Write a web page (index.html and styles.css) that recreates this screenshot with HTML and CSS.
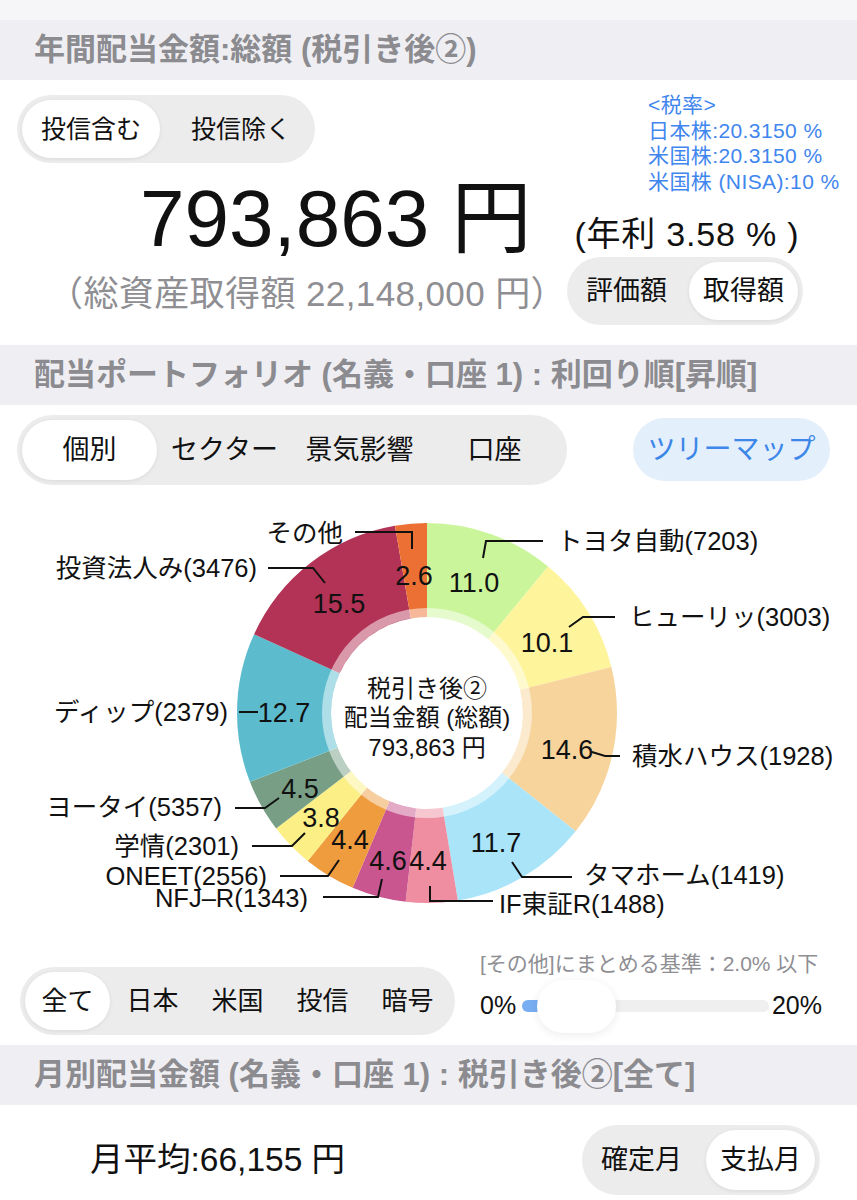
FILE: index.html
```html
<!DOCTYPE html>
<html>
<head>
<meta charset="UTF-8">
<title>配当ポートフォリオ</title>
<link rel="stylesheet" href="styles.css">
</head>
<body>

<div class="sec-head sec-head-first">年間配当金額:総額 (税引き後②)</div>

<div class="summary">
  <div class="summary-top">
    <div class="seg seg-fund">
      <span class="seg-item on">投信含む</span>
      <span class="seg-item">投信除く</span>
    </div>
    <div class="tax">
      &lt;税率&gt;<br>
      日本株:20.3150 %<br>
      米国株:20.3150 %<br>
      米国株 (NISA):10 %
    </div>
  </div>
  <div class="total">
    <span class="total-num">793,863 円</span>
    <span class="total-rate">(年利 3.58 % )</span>
  </div>
  <div class="summary-bottom">
    <span class="cost">（総資産取得額 22,148,000 円）</span>
    <div class="seg seg-basis">
      <span class="seg-item">評価額</span>
      <span class="seg-item on">取得額</span>
    </div>
  </div>
</div>

<div class="sec-head">配当ポートフォリオ (名義・口座 1) : 利回り順[昇順]</div>

<div class="portfolio">
  <div class="tabs-row">
    <div class="seg seg-tabs">
      <span class="seg-item on">個別</span>
      <span class="seg-item">セクター</span>
      <span class="seg-item">景気影響</span>
      <span class="seg-item">口座</span>
    </div>
    <a class="tree-btn" href="javascript:">ツリーマップ</a>
  </div>

  <svg class="chart" width="857" height="464" viewBox="0 485 857 464">
    <g transform="rotate(-90 427 713)" fill="none" stroke-width="94">
      <circle cx="427" cy="713" r="143" pathLength="100" stroke="#cbf59b" stroke-dasharray="11 89" stroke-dashoffset="0"/>
      <circle cx="427" cy="713" r="143" pathLength="100" stroke="#fef49c" stroke-dasharray="10.1 89.9" stroke-dashoffset="-11"/>
      <circle cx="427" cy="713" r="143" pathLength="100" stroke="#f7d49c" stroke-dasharray="14.6 85.4" stroke-dashoffset="-21.1"/>
      <circle cx="427" cy="713" r="143" pathLength="100" stroke="#a9e4f9" stroke-dasharray="11.7 88.3" stroke-dashoffset="-35.7"/>
      <circle cx="427" cy="713" r="143" pathLength="100" stroke="#ee8ea0" stroke-dasharray="4.4 95.6" stroke-dashoffset="-47.4"/>
      <circle cx="427" cy="713" r="143" pathLength="100" stroke="#c9568f" stroke-dasharray="4.6 95.4" stroke-dashoffset="-51.8"/>
      <circle cx="427" cy="713" r="143" pathLength="100" stroke="#ef9c3e" stroke-dasharray="4.4 95.6" stroke-dashoffset="-56.4"/>
      <circle cx="427" cy="713" r="143" pathLength="100" stroke="#fbef86" stroke-dasharray="3.8 96.2" stroke-dashoffset="-60.8"/>
      <circle cx="427" cy="713" r="143" pathLength="100" stroke="#789f86" stroke-dasharray="4.5 95.5" stroke-dashoffset="-64.6"/>
      <circle cx="427" cy="713" r="143" pathLength="100" stroke="#5cbcce" stroke-dasharray="12.7 87.3" stroke-dashoffset="-69.1"/>
      <circle cx="427" cy="713" r="143" pathLength="100" stroke="#b23356" stroke-dasharray="15.5 84.5" stroke-dashoffset="-81.8"/>
      <circle cx="427" cy="713" r="143" pathLength="100" stroke="#ec7033" stroke-dasharray="2.7 97.3" stroke-dashoffset="-97.3"/>
    </g>
    <circle cx="427" cy="713" r="100.5" fill="none" stroke="#fff" stroke-width="9" opacity="0.5"/>

    <g class="center-text">
      <text x="427" y="697">税引き後②</text>
      <text x="427" y="726">配当金額 (総額)</text>
      <text x="427" y="756">793,863 円</text>
    </g>

    <g class="leaders">
      <polyline points="355,532 412,532 412,549"/>
      <polyline points="268,568 313,568 325,583"/>
      <polyline points="239,712 258,712"/>
      <polyline points="235,808 265,808 279,798"/>
      <polyline points="252,846 292,846 305,833"/>
      <polyline points="280,876 328,876 339,860"/>
      <polyline points="323,897 378,897 382,879"/>
      <polyline points="543,541 486,541 483,558"/>
      <polyline points="615,617 583,617 569,627"/>
      <polyline points="620,756 605,756 592,752"/>
      <polyline points="572,877 522,877 512,862"/>
      <polyline points="493,901 430,901 430,886"/>
    </g>

    <g class="values">
      <text x="414" y="585">2.6</text>
      <text x="474" y="592">11.0</text>
      <text x="339" y="613">15.5</text>
      <text x="547" y="652">10.1</text>
      <text x="284" y="722">12.7</text>
      <text x="567" y="759">14.6</text>
      <text x="300" y="798">4.5</text>
      <text x="321" y="827">3.8</text>
      <text x="350" y="849">4.4</text>
      <text x="388" y="870">4.6</text>
      <text x="428" y="870">4.4</text>
      <text x="496" y="852">11.7</text>
    </g>

    <g class="names names-left">
      <text x="343" y="542">その他</text>
      <text x="257" y="577">投資法人み(3476)</text>
      <text x="228" y="721">ディップ(2379)</text>
      <text x="222" y="816">ヨータイ(5357)</text>
      <text x="239" y="855">学情(2301)</text>
      <text x="267" y="885">ONEET(2556)</text>
      <text x="308" y="907">NFJ–R(1343)</text>
    </g>
    <g class="names">
      <text x="557" y="550">トヨタ自動(7203)</text>
      <text x="629" y="626">ヒューリッ(3003)</text>
      <text x="632" y="765">積水ハウス(1928)</text>
      <text x="584" y="884">タマホーム(1419)</text>
      <text x="499" y="913">IF東証R(1488)</text>
    </g>
  </svg>

  <div class="filter-row">
    <div class="seg seg-filter">
      <span class="seg-item on">全て</span>
      <span class="seg-item">日本</span>
      <span class="seg-item">米国</span>
      <span class="seg-item">投信</span>
      <span class="seg-item">暗号</span>
    </div>
    <div class="other-rule">
      <div class="rule-caption">[その他]にまとめる基準：2.0% 以下</div>
      <div class="slider">
        <span class="slider-end">0%</span>
        <div class="track">
          <div class="track-fill"></div>
          <div class="thumb"></div>
        </div>
        <span class="slider-end">20%</span>
      </div>
    </div>
  </div>
</div>

<div class="sec-head">月別配当金額 (名義・口座 1) : 税引き後②[全て]</div>

<div class="monthly">
  <span class="avg">月平均:66,155 円</span>
  <div class="seg seg-month">
    <span class="seg-item">確定月</span>
    <span class="seg-item on">支払月</span>
  </div>
</div>

</body>
</html>
```

FILE: styles.css
```css
body
{
  margin:0;
  width:857px;
  height:1200px;
  overflow:hidden;
  font-family:"Liberation Sans", "Noto Sans CJK JP", sans-serif;
  color:#111;
  background:white
}
a, a:link, a:visited
{
  text-decoration:none
}

/* grey section bands */
.sec-head
{
  background:#efeff3;
  color:#8b8b90;
  font-weight:bold;
  font-size:31px;
  height:60px;
  line-height:60px;
  padding-left:34px;
  white-space:nowrap
}
.sec-head-first
{
  border-top:20px solid #f6f6f8
}

/* segmented controls */
.seg
{
  display:flex;
  background:#ececec;
  border-radius:40px;
  padding:5px
}
.seg-item
{
  font-size:25px;
  height:58px;
  line-height:58px;
  border-radius:29px;
  text-align:center;
  white-space:nowrap
}
.seg-item.on
{
  background:white;
  box-shadow:0 1px 4px rgba(0,0,0,0.08)
}

/* summary */
.summary
{
  padding:12px 9px 20px 17px
}
.summary-top
{
  display:flex;
  align-items:flex-start
}
.seg-fund
{
  margin-top:3px;
  gap:12px
}
.seg-fund .seg-item
{
  padding:0 19px
}
.tax
{
  margin-left:auto;
  width:200px;
  font-size:21px;
  line-height:25.7px;
  letter-spacing:0.4px;
  color:#3f86ee;
  white-space:nowrap
}
.total
{
  display:flex;
  align-items:baseline;
  height:80px;
  margin-top:-16px;
  padding-left:123px
}
.total-num
{
  font-size:80px;
  line-height:80px
}
.total-rate
{
  font-size:34px;
  letter-spacing:0.8px;
  margin-left:43px
}
.summary-bottom
{
  display:flex;
  align-items:center;
  height:68px;
  margin-top:-2px
}
.cost
{
  margin-left:31px;
  font-size:35px;
  letter-spacing:0.4px;
  color:#8e8e93;
  white-space:nowrap
}
.seg-basis
{
  margin-left:auto;
  margin-right:45px;
  gap:8px
}
.seg-basis .seg-item
{
  font-size:27px;
  padding:0 14px
}

/* portfolio */
.portfolio
{
  padding:10px 0 10px 0
}
.tabs-row
{
  display:flex;
  align-items:center;
  height:70px;
  padding:0 27px 0 17px
}
.seg-tabs
{
  display:grid;
  grid-template-columns:repeat(4, 135px)
}
.seg-tabs .seg-item
{
  font-size:27px;
  height:60px;
  line-height:60px;
  border-radius:30px
}
.tree-btn
{
  margin-left:auto;
  width:197px;
  height:63px;
  line-height:63px;
  border-radius:32px;
  background:#e4effc;
  color:#3d87e8;
  font-size:28px;
  text-align:center
}
.chart
{
  display:block
}
.center-text text
{
  font-size:24px;
  fill:#111;
  text-anchor:middle
}
.leaders polyline
{
  fill:none;
  stroke:#111;
  stroke-width:2
}
.values text
{
  font-size:27px;
  fill:#111;
  text-anchor:middle
}
.names text
{
  font-size:25.5px;
  fill:#111
}
.names-left text
{
  text-anchor:end
}

.filter-row
{
  display:flex;
  align-items:flex-end;
  height:86px;
  padding:0 35px 0 20px
}
.seg-filter
{
  display:grid;
  grid-template-columns:repeat(5, 85px)
}
.seg-filter .seg-item
{
  font-size:26px
}
.other-rule
{
  margin-left:auto;
  width:342px
}
.rule-caption
{
  font-size:21px;
  line-height:26px;
  color:#8e8e93;
  white-space:nowrap
}
.slider
{
  display:flex;
  align-items:center;
  height:58px
}
.slider-end
{
  font-size:25px
}
.track
{
  position:relative;
  flex:1;
  height:12px;
  margin:0 3px 0 6px;
  border-radius:6px;
  background:#efefef
}
.track-fill
{
  width:20px;
  height:12px;
  border-radius:6px 0 0 6px;
  background:#78aef2
}
.thumb
{
  position:absolute;
  left:15px;
  top:-20px;
  width:79px;
  height:53px;
  border-radius:27px;
  background:white;
  box-shadow:0 2px 10px rgba(0,0,0,0.08)
}

/* monthly */
.monthly
{
  display:flex;
  align-items:flex-start;
  padding:20px 37px 0 90px
}
.avg
{
  font-size:33.5px;
  line-height:70px;
  white-space:nowrap
}
.seg-month
{
  margin-left:auto;
  gap:10px
}
.seg-month .seg-item
{
  font-size:27px;
  height:60px;
  line-height:60px;
  border-radius:30px;
  padding:0 14px
}
```
